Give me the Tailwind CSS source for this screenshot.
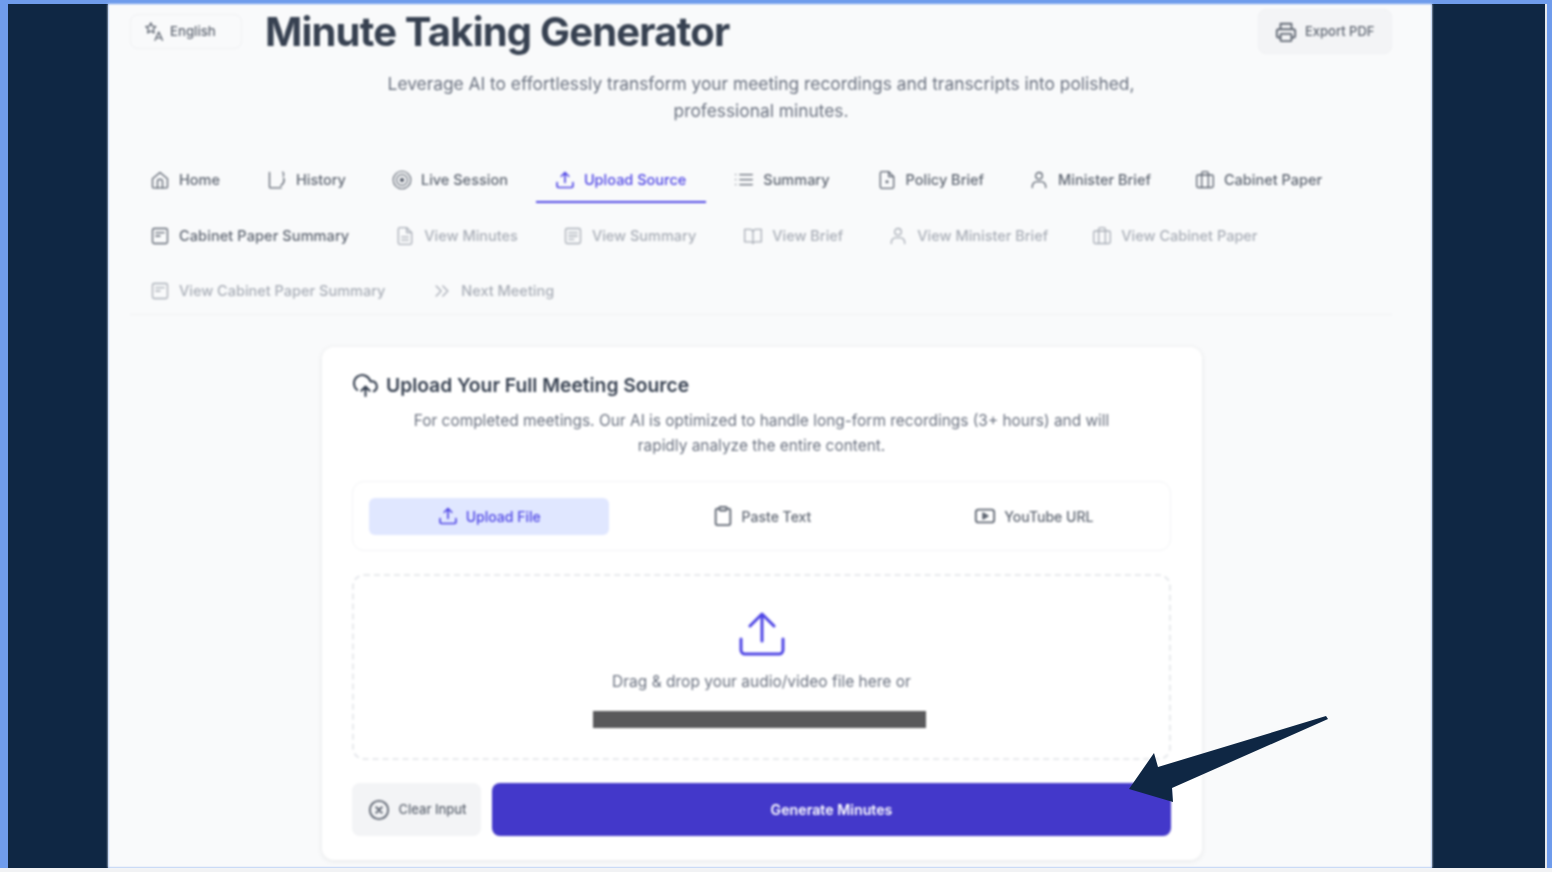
<!DOCTYPE html>
<html lang="en">
<head>
  <meta charset="UTF-8">
  <title>Minute Taking Generator</title>
  <script src="https://cdn.jsdelivr.net/npm/@tailwindcss/browser@4"></script>
</head>
<body class="relative h-[872px] w-[1552px] overflow-hidden bg-[#6f9cec] pt-1 font-['Inter','Liberation_Sans',sans-serif] [stroke-linecap:round] [stroke-linejoin:round]">

  <svg class="hidden">
    <symbol id="i-lang" viewBox="0 0 24 24"><path d="M7 1l1.800 4L13 5.500 10 8.500l.8 4.500L7 10.800 3.200 13 4 8.500 1 5.500 5.200 5z"/><path d="M12 22l4.500-10 4.500 10M13.500 19h6"/></symbol>
    <symbol id="i-home" viewBox="0 0 24 24"><path d="M3 10.500 12 3l9 7.500V20a1.500 1.500 0 0 1-1.500 1.500h-15A1.500 1.500 0 0 1 3 20z"/><path d="M9 21.500V14a3 3 0 0 1 6 0v7.500"/></symbol>
    <symbol id="i-history" viewBox="0 0 24 24"><path d="M3 3v17a1.500 1.500 0 0 0 1.500 1.500H17"/><path d="M19 2.500c1.500 2 1.500 3.500.5 5M20 10c1 2.500.5 5-1.500 7l-2 2"/></symbol>
    <symbol id="i-live" viewBox="0 0 24 24"><circle cx="12" cy="12" r="10.500"/><circle cx="12" cy="12" r="6.500"/><circle cx="12" cy="12" r="2" fill="currentColor"/></symbol>
    <symbol id="i-upload" viewBox="0 0 24 24"><path d="M12 15V3M7.500 7.500 12 3l4.500 4.500"/><path d="M2.500 15v4a2 2 0 0 0 2 2h15a2 2 0 0 0 2-2v-4"/></symbol>
    <symbol id="i-upload-lg" viewBox="0 0 48 48"><path d="M24 30V3M12 15 24 3l12 12"/><path d="M3 28v11a4 4 0 0 0 4 4h34a4 4 0 0 0 4-4V28"/></symbol>
    <symbol id="i-list" viewBox="0 0 24 24"><path d="M7 5.500h15M7 11.500h15M7 17.500h15M2 5.500h.01M2 11.500h.01M2 17.500h.01"/></symbol>
    <symbol id="i-filedot" viewBox="0 0 24 24"><path d="M14 2H6a2 2 0 0 0-2 2v16a2 2 0 0 0 2 2h12a2 2 0 0 0 2-2V8z"/><path d="M14 2v6h6"/><circle cx="12" cy="14" r="1" fill="currentColor"/></symbol>
    <symbol id="i-user" viewBox="0 0 24 24"><circle cx="12" cy="7" r="4"/><path d="M4 21v-1.500A5.500 5.500 0 0 1 9.500 14h5a5.500 5.500 0 0 1 5.500 5.500V21"/></symbol>
    <symbol id="i-case" viewBox="0 0 24 24"><rect x="2" y="6" width="20" height="15" rx="2"/><path d="M8 21V4a2 2 0 0 1 2-2h4a2 2 0 0 1 2 2v17"/></symbol>
    <symbol id="i-note" viewBox="0 0 24 24"><rect x="3" y="3" width="18" height="18" rx="2"/><path d="M7 8h10M7 12h5"/></symbol>
    <symbol id="i-filetext" viewBox="0 0 24 24"><path d="M14 2H6a2 2 0 0 0-2 2v16a2 2 0 0 0 2 2h12a2 2 0 0 0 2-2V8z"/><path d="M14 2v6h6M8 13h8M8 17h8"/></symbol>
    <symbol id="i-lines" viewBox="0 0 24 24"><rect x="3" y="3" width="18" height="18" rx="2"/><path d="M7 8h10M7 12h10M7 16h6"/></symbol>
    <symbol id="i-book" viewBox="0 0 24 24"><path d="M12 6.500V21M2 4h6.500A3.500 3.500 0 0 1 12 7.500 3.500 3.500 0 0 1 15.500 4H22v15h-7a3 3 0 0 0-3 2 3 3 0 0 0-3-2H2z"/></symbol>
    <symbol id="i-next" viewBox="0 0 24 24"><path d="m5 6 6 6-6 6M13 6l6 6-6 6"/></symbol>
    <symbol id="i-printer" viewBox="0 0 24 24"><path d="M6 9V3h12v6M6 18H4a2 2 0 0 1-2-2v-5a2 2 0 0 1 2-2h16a2 2 0 0 1 2 2v5a2 2 0 0 1-2 2h-2"/><rect x="6" y="14" width="12" height="8" rx="1"/></symbol>
    <symbol id="i-cloud" viewBox="0 0 24 24"><path d="M12 13v9M8 17l4-4 4 4"/><path d="M20 17.500A5 5 0 0 0 18 8h-1.300A8 8 0 1 0 4 16.300"/></symbol>
    <symbol id="i-clip" viewBox="0 0 24 24"><rect x="8" y="2" width="8" height="4" rx="1"/><path d="M16 4h2a2 2 0 0 1 2 2v14a2 2 0 0 1-2 2H6a2 2 0 0 1-2-2V6a2 2 0 0 1 2-2h2"/></symbol>
    <symbol id="i-yt" viewBox="0 0 24 24"><rect x="2" y="5" width="20" height="14" rx="3"/><path d="m10 9 5 3-5 3z" fill="currentColor"/></symbol>
    <symbol id="i-x" viewBox="0 0 24 24"><circle cx="12" cy="12" r="10"/><path d="m15 9-6 6M9 9l6 6"/></symbol>
  </svg>

  <div class="flex h-[864px]">
    <div class="w-2 shrink-0"></div>
    <div class="w-[100px] shrink-0 bg-[#0f2744]"></div>

    <!-- page -->
    <main class="w-[1324px] shrink-0 overflow-hidden bg-[#f9fafb] pl-[22px] pr-[40px] pt-[5px] blur-[0.8px]">
      <header class="flex h-[45px] items-center justify-between">
        <div class="flex items-center">
          <button class="flex h-[35px] w-[112px] items-center gap-[5px] rounded-lg border border-[#f0f1f3] pl-[14px] text-[13.2px] font-medium text-[#5f6672]">
            <svg class="h-5 w-5 fill-none stroke-current stroke-[1.6]"><use href="#i-lang"/></svg>English
          </button>
          <h1 class="ml-[23px] text-[40px] leading-[45px] font-bold tracking-[-0.8px] text-[#374151]">Minute Taking Generator</h1>
        </div>
        <button class="flex h-[45px] w-[134px] items-center gap-2 rounded-lg border border-[#f0f1f3] bg-[#f3f4f6] pl-[16px] text-[13px] font-medium text-[#5f6672]">
          <svg class="h-[22px] w-[22px] fill-none stroke-current stroke-2"><use href="#i-printer"/></svg>Export PDF
        </button>
      </header>

      <p class="mx-auto mt-[16px] max-w-[768px] text-center text-[17.35px] leading-[27px] text-[#6b7280]">Leverage AI to effortlessly transform your meeting recordings and transcripts into polished, professional minutes.</p>

      <nav class="mt-[34px] flex flex-wrap gap-x-2 gap-y-[10.5px] border-b border-[#f0f1f3] text-[14.5px] font-medium text-[#5f6672]">
        <a class="flex h-[45px] items-center gap-[9px] border-b-2 border-transparent px-[20px]"><svg class="h-5 w-5 fill-none stroke-current stroke-[1.6]"><use href="#i-home"/></svg>Home</a>
        <a class="flex h-[45px] items-center gap-[9px] border-b-2 border-transparent px-[19px]"><svg class="h-5 w-5 fill-none stroke-current stroke-[1.6]"><use href="#i-history"/></svg>History</a>
        <a class="flex h-[45px] items-center gap-[9px] border-b-2 border-transparent px-[19px]"><svg class="h-5 w-5 fill-none stroke-current stroke-[1.4]"><use href="#i-live"/></svg>Live Session</a>
        <a class="ml-[1px] flex h-[45px] items-center gap-[9px] border-b-2 border-[#4f46e5] pl-[19px] pr-[20px] text-[#4f46e5]"><svg class="h-5 w-5 fill-none stroke-current stroke-2"><use href="#i-upload"/></svg>Upload Source</a>
        <a class="flex h-[45px] items-center gap-[9px] border-b-2 border-transparent pl-[20px] pr-[20px]"><svg class="h-5 w-5 fill-none stroke-current stroke-[1.6]"><use href="#i-list"/></svg>Summary</a>
        <a class="flex h-[45px] items-center gap-[9px] border-b-2 border-transparent pl-[19px] pr-[18px]"><svg class="h-5 w-5 fill-none stroke-current stroke-[1.6]"><use href="#i-filedot"/></svg>Policy Brief</a>
        <a class="flex h-[45px] items-center gap-[9px] border-b-2 border-transparent pl-[19px] pr-[17px]"><svg class="h-5 w-5 fill-none stroke-current stroke-[1.6]"><use href="#i-user"/></svg>Minister Brief</a>
        <a class="flex h-[45px] items-center gap-[9px] border-b-2 border-transparent px-[19px]"><svg class="h-5 w-5 fill-none stroke-current stroke-[1.6]"><use href="#i-case"/></svg>Cabinet Paper</a>
        <a class="flex h-[45px] items-center gap-[9px] border-b-2 border-transparent pl-[20px] pr-[19px] pt-[2px] tracking-[0.1px]"><svg class="h-5 w-5 fill-none stroke-current stroke-[1.6]"><use href="#i-note"/></svg>Cabinet Paper Summary</a>
        <a class="flex h-[45px] items-center gap-[9px] border-b-2 border-transparent pl-[19px] pr-[18px] pt-[2px] text-[#a9aeb7]"><svg class="h-5 w-5 fill-none stroke-current stroke-[1.6]"><use href="#i-filetext"/></svg>View Minutes</a>
        <a class="flex h-[45px] items-center gap-[9px] border-b-2 border-transparent pl-[19px] pr-[20px] pt-[2px] text-[#a9aeb7]"><svg class="h-5 w-5 fill-none stroke-current stroke-[1.6]"><use href="#i-lines"/></svg>View Summary</a>
        <a class="flex h-[45px] items-center gap-[9px] border-b-2 border-transparent pl-[19px] pr-[18px] pt-[2px] text-[#a9aeb7]"><svg class="h-5 w-5 fill-none stroke-current stroke-[1.6]"><use href="#i-book"/></svg>View Brief</a>
        <a class="flex h-[45px] items-center gap-[9px] border-b-2 border-transparent pl-[19px] pr-[17px] pt-[2px] text-[#a9aeb7]"><svg class="h-5 w-5 fill-none stroke-current stroke-[1.6]"><use href="#i-user"/></svg>View Minister Brief</a>
        <a class="flex h-[45px] items-center gap-[9px] border-b-2 border-transparent px-[19px] pt-[2px] text-[#a9aeb7]"><svg class="h-5 w-5 fill-none stroke-current stroke-[1.6]"><use href="#i-case"/></svg>View Cabinet Paper</a>
        <a class="flex h-[45px] items-center gap-[9px] border-b-2 border-transparent px-[20px] text-[#a9aeb7]"><svg class="h-5 w-5 fill-none stroke-current stroke-[1.6]"><use href="#i-note"/></svg>View Cabinet Paper Summary</a>
        <a class="flex h-[45px] items-center gap-[9px] border-b-2 border-transparent px-[19px] text-[#a9aeb7]"><svg class="h-5 w-5 fill-none stroke-current stroke-[1.6]"><use href="#i-next"/></svg>Next Meeting</a>
      </nav>

      <!-- upload card -->
      <section class="ml-[192px] mt-[32px] h-[513px] w-[880px] rounded-xl bg-white pl-[30px] pr-[31px] pt-[24px] shadow-[0_1px_6px_rgba(0,0,0,0.08)]">
        <h2 class="flex h-[28px] items-center gap-[8px] text-[19.25px] font-semibold text-[#374151]">
          <svg class="ml-[1px] h-[25px] w-[25px] fill-none stroke-current stroke-2"><use href="#i-cloud"/></svg>Upload Your Full Meeting Source
        </h2>
        <p class="mx-auto mt-[9px] w-[720px] text-center text-[15.45px] leading-[25px] text-[#6b7280]">For completed meetings. Our AI is optimized to handle long-form recordings (3+ hours) and will rapidly analyze the entire content.</p>

        <div class="mt-[23px] grid h-[70px] grid-cols-3 items-center gap-8 rounded-xl border border-[#f3f4f6] px-4 text-[14px] font-medium text-[#5f6672]">
          <button class="flex h-[37px] items-center justify-center gap-2 rounded-md bg-[#e0e7ff] text-[#4f46e5]"><svg class="h-5 w-5 fill-none stroke-current stroke-2"><use href="#i-upload"/></svg>Upload File</button>
          <button class="flex h-[37px] items-center justify-center gap-2"><svg class="h-[22px] w-[22px] fill-none stroke-current stroke-2"><use href="#i-clip"/></svg>Paste Text</button>
          <button class="flex h-[37px] items-center justify-center gap-2"><svg class="h-[22px] w-[22px] fill-none stroke-current stroke-2"><use href="#i-yt"/></svg>YouTube URL</button>
        </div>

        <div class="mt-[23px] flex h-[186px] flex-col items-center rounded-xl border-2 border-dashed border-[#e8eaed] pt-[35px]">
          <svg class="h-[48px] w-[48px] fill-none stroke-[#4f46e5] stroke-[3]"><use href="#i-upload-lg"/></svg>
          <p class="mt-[11px] text-[15.5px] leading-[24px] text-[#6b7280]">Drag &amp; drop your audio/video file here or</p>
          <div class="mr-[4px] mt-[17px] h-[17px] w-[333px] bg-[#59595b]"></div>
        </div>

        <div class="mt-[23px] flex gap-[11px]">
          <button class="flex h-[53px] w-[129px] items-center justify-center gap-2 rounded-lg bg-[#f3f4f6] pl-[2px] text-[13px] font-medium text-[#5f6672]"><svg class="h-[22px] w-[22px] fill-none stroke-current stroke-2"><use href="#i-x"/></svg>Clear Input</button>
          <button class="h-[53px] w-[679px] rounded-lg bg-[#4338ca] text-[14.2px] font-semibold text-white">Generate Minutes</button>
        </div>
      </section>
    </main>

    <div class="w-[113px] shrink-0 bg-[#0f2744]"></div>
    <div class="w-[2px] shrink-0 bg-[#e5e7eb]"></div>
  </div>
  <div class="h-1 bg-[#f1f2f4]"></div>

  <!-- annotation arrow -->
  <svg class="absolute left-0 top-0 h-[872px] w-[1552px]" viewBox="0 0 1552 872"><polygon points="1129,789 1154,753 1158,767 1326,716 1328,719 1172,788 1173,802" fill="#0f2744"/></svg>
</body>
</html>
